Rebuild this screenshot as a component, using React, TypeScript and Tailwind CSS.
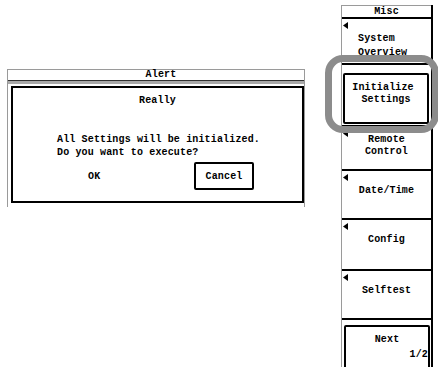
import React from "react";

const mono = { fontFamily: '"Liberation Mono", "DejaVu Sans Mono", monospace' };

function Tri() {
  return (
    <svg className="absolute left-[1px] top-[3px]" width="5" height="7" viewBox="0 0 5 7">
      <polygon points="5,0 5,7 0,3.5" fill="#000" />
    </svg>
  );
}

function Key({
  h,
  lines,
  pb = 0,
  pt = 0,
  left = false,
}: {
  h: string;
  lines: string[];
  pb?: number;
  pt?: number;
  left?: boolean;
}) {
  return (
    <div className={`relative shrink-0 border-t-2 border-black ${h}`}>
      <Tri />
      <div
        className={`flex h-full flex-col ${left ? "items-start justify-start pl-[16px] leading-[14px]" : "items-center justify-center leading-[12px]"}`}
        style={{ paddingBottom: pb, paddingTop: pt }}
      >
        {lines.map((l) => (
          <span key={l}>{l}</span>
        ))}
      </div>
    </div>
  );
}

export default function App() {
  return (
    <div
      className="relative flex h-[367px] w-[438px] overflow-hidden bg-white pl-[7px] text-[10px] font-bold tracking-[0.15px] text-black"
      style={mono}
    >
      {/* Alert dialog */}
      <div className="mt-[69px] h-[138px] w-[298px] shrink-0 border-l border-r border-t border-[#9a9a9a]">
        <div className="flex h-[10px] items-end justify-center pl-[10px] leading-[10px]">
          <span>Alert</span>
        </div>
        <div className="h-[1px] bg-[#333]" />
        <div className="h-[3px] bg-[#aaa]" />
        <div className="h-[2px]" />
        <div className="ml-[3px] flex h-[117px] w-[293px] flex-col border-2 border-black pt-[7px]">
          <div className="text-center leading-[12px]">Really</div>
          <div className="mt-[26px] pl-[44px] leading-[13px]">
            <div>All Settings will be initialized.</div>
            <div>Do you want to execute?</div>
          </div>
          <div className="mt-[3px] flex items-center pl-[75px]">
            <span className="w-[12px]">OK</span>
            <div className="ml-[94px] flex h-[28px] w-[60px] items-center justify-center rounded-[2px] border-2 border-black">
              Cancel
            </div>
          </div>
        </div>
      </div>

      {/* Soft key menu */}
      <div className="ml-[36px] mt-[5px] flex h-[362px] w-[92px] shrink-0 flex-col border-l border-r-2 border-l-[#9a9a9a] border-r-black">
        <div className="flex h-[12px] shrink-0 items-end justify-center border-t border-[#9a9a9a] leading-[10px]">
          Misc
        </div>
        <Key h="h-[46px]" lines={["System", "Overview"]} left pt={13} />
        <div className="h-[62px] shrink-0 border-t-2 border-black">
          <div className="ml-[1px] mt-[8px] flex h-[51px] w-[86px] flex-col items-center justify-center rounded-[2px] border-2 border-black pb-[9px] pr-[6px] leading-[12px]">
            <span>Initialize</span>
            <span>&nbsp;Settings</span>
          </div>
        </div>
        <Key h="h-[44px]" lines={["Remote", "Control"]} pb={4} />
        <Key h="h-[49px]" lines={["Date/Time"]} pb={8} />
        <Key h="h-[51px]" lines={["Config"]} pb={10} />
        <Key h="h-[49px]" lines={["Selftest"]} pb={8} />
        <div className="min-h-0 flex-1 overflow-hidden border-t-2 border-black">
          <div className="ml-[2px] mt-[5px] flex h-[60px] w-[86px] flex-col rounded-[2px] border-2 border-black pt-[7px] leading-[12px]">
            <span className="text-center">Next</span>
            <span className="mt-[3px] self-end">1/2</span>
          </div>
        </div>
      </div>

      {/* highlight ring */}
      <div className="absolute left-[325px] top-[55px] h-[78px] w-[114px] rounded-[18px] border-[7px] border-[#8c8c8c]" />
    </div>
  );
}
